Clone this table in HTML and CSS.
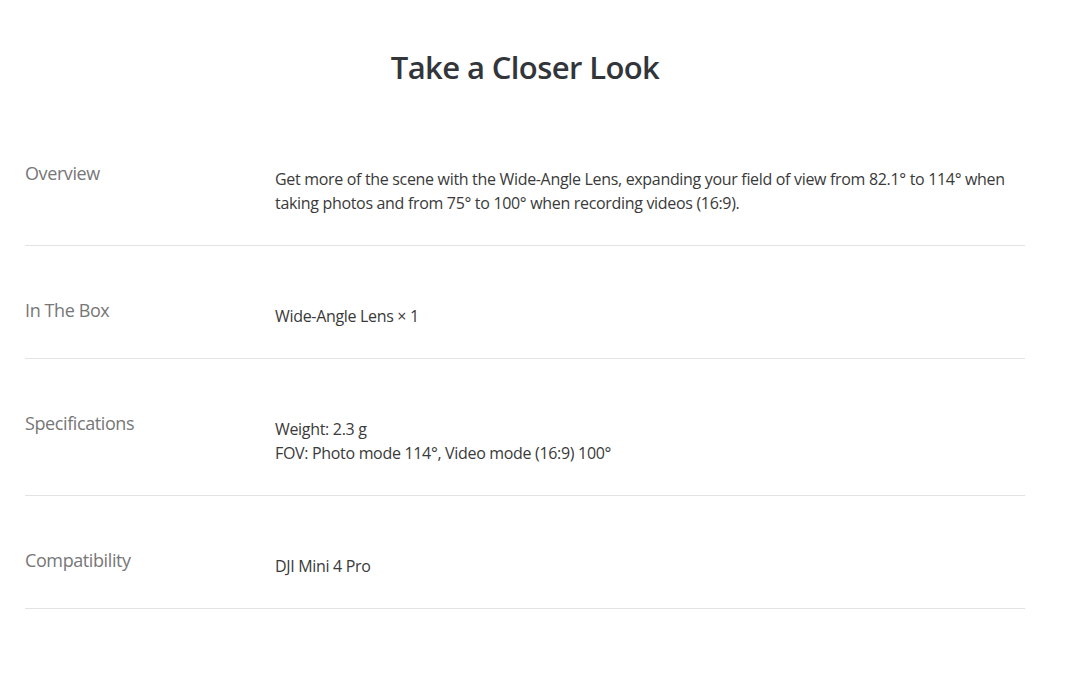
FILE: index.html
```html
<!DOCTYPE html>
<html lang="en">
<head>
<meta charset="utf-8">
<title>Take a Closer Look</title>
<link rel="stylesheet" href="styles.css">
</head>
<body>
<main class="page">
  <h1 class="title">Take a Closer Look</h1>
  <div class="specs">
    <div class="row">
      <div class="label">Overview</div>
      <div class="value">Get more of the scene with the Wide-Angle Lens, expanding your field of view from 82.1° to 114° when taking photos and from 75° to 100° when recording videos (16:9).</div>
    </div>
    <div class="row">
      <div class="label">In The Box</div>
      <div class="value">Wide-Angle Lens × 1</div>
    </div>
    <div class="row">
      <div class="label">Specifications</div>
      <div class="value">Weight: 2.3 g<br>FOV: Photo mode 114°, Video mode (16:9) 100°</div>
    </div>
    <div class="row">
      <div class="label">Compatibility</div>
      <div class="value">DJI Mini 4 Pro</div>
    </div>
  </div>
</main>
</body>
</html>
```
FILE: styles.css
```css
html, body {
  margin: 0;
  padding: 0;
  background: #ffffff;
}
body {
  font-family: "Open Sans", "Liberation Sans", sans-serif;
}
.page {
  width: 1000px;
  padding: 45px 0 0 25px;
}
.title {
  margin: 0 0 20px;
  text-align: center;
  font-size: 31px;
  line-height: 44px;
  font-weight: 600;
  letter-spacing: -0.6px;
  color: #32363a;
}
.row {
  display: flex;
  padding: 51px 0 30px;
  border-bottom: 1px solid #e3e3e3;
}
.label {
  flex: 0 0 250px;
  font-size: 18px;
  line-height: 26px;
  letter-spacing: -0.4px;
  color: #777777;
}
.value {
  flex: 1;
  margin-top: 7px;
  font-size: 16px;
  line-height: 24px;
  letter-spacing: -0.32px;
  color: #3a3a3a;
}
```
